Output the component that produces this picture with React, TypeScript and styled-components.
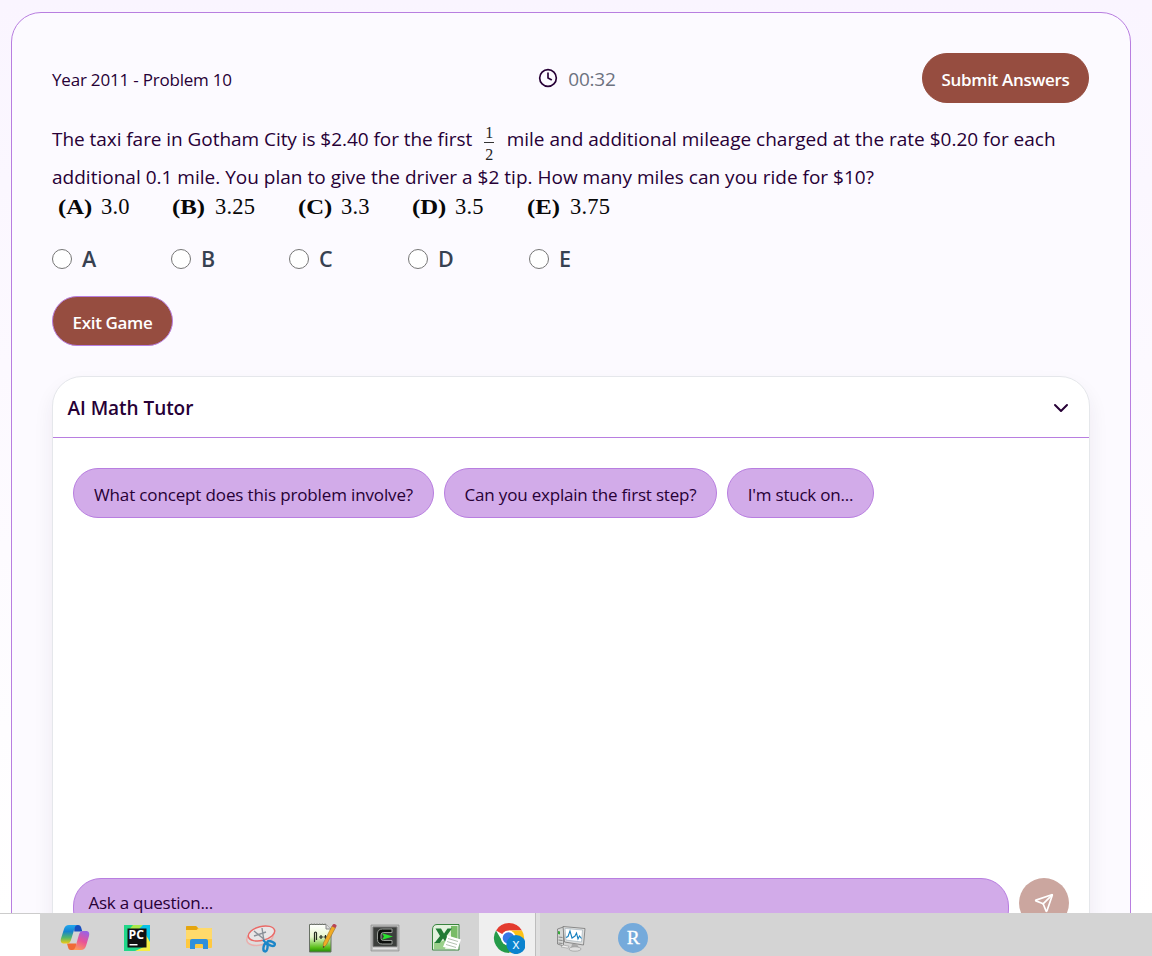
import React from "react";
import styled, { createGlobalStyle } from "styled-components";
import { ChevronDown, Clock, Send } from "lucide-react";

const ink = "#270036";
const violet = "#b87ee0";
const lilac = "#d2abe9";
const brick = "#964d40";

const Global = createGlobalStyle`
  * { box-sizing: border-box; }
  body { margin: 0; background: #fff; }
`;

const Screen = styled.div`
  width: 1152px;
  height: 956px;
  display: flex;
  flex-direction: column;
  overflow: hidden;
  font-family: "Open Sans", "Noto Sans", sans-serif;
  color: ${ink};
`;

const Page = styled.main`
  height: 913px;
  overflow: hidden;
  padding: 12px 21px 0 11px;
  background: linear-gradient(#faf5ff, #ffffff);
`;

const GameCard = styled.section`
  height: 1000px;
  border: 1px solid ${violet};
  border-radius: 30px;
  padding: 40px;
  background: #fcfaff;
`;

const Header = styled.header`
  width: 1037px;
  height: 50px;
  display: flex;
  align-items: center;
  justify-content: space-between;
`;

const Text = styled.span<{ $size?: number; $track?: number; $weight?: number }>`
  font-size: ${(p) => p.$size ?? 17}px;
  letter-spacing: ${(p) => p.$track ?? 0}px;
  font-weight: ${(p) => p.$weight ?? 400};
  white-space: nowrap;
`;

const Title = styled(Text)`
  padding-top: 3px;
`;

const Timer = styled.div`
  display: flex;
  align-items: center;
  gap: 10px;
  color: ${ink};
  span { color: #6d7280; padding-top: 2px; }
`;

const Button = styled.button<{ $width: number; $outlined?: boolean }>`
  display: flex;
  align-items: center;
  justify-content: center;
  width: ${(p) => p.$width}px;
  height: 50px;
  padding: 3px 0 0;
  border: 1px solid ${(p) => (p.$outlined ? violet : brick)};
  border-radius: 25px;
  background: ${brick};
  color: #fff;
  font-family: inherit;
`;

const Question = styled.div`
  margin-top: 17px;
`;

const Line = styled.div`
  display: flex;
  height: 38px;
  line-height: 38px;
`;

const Fraction = styled.span`
  display: flex;
  flex-direction: column;
  width: 10px;
  margin: 3px 12.5px 0 12px;
  text-align: center;
  font: 16px/19px "Liberation Serif", serif;
  color: #222;
  span:first-child { height: 21px; border-bottom: 1px solid #333; }
  span:last-child { padding-top: 2px; }
`;

const MathRow = styled.div`
  display: grid;
  grid-template-columns: 114px 126px 114px 115px 100px;
  height: 24px;
  padding-left: 6px;
  font: 22.5px/22px "Liberation Serif", serif;
  color: #080808;
`;

const MathChoice = styled.div`
  display: flex;
  gap: 8px;
  white-space: nowrap;
  span { letter-spacing: 0.2px; }
`;

const MathLabel = styled.b`
  width: 35px;
  font-size: 21.5px;
  transform: scaleX(1.15);
  transform-origin: left;
`;

const Options = styled.div`
  display: grid;
  grid-template-columns: 119px 118px 119px 121px 60px;
  height: 24px;
  margin-top: 27px;
`;

const Option = styled.label`
  display: flex;
  align-items: center;
  gap: 10px;
  height: 24px;
  color: #374151;
  ${Text} { line-height: 24px; padding-bottom: 1px; }
`;

const Radio = styled.span`
  width: 20px;
  height: 20px;
  border: 1px solid #767676;
  border-radius: 50%;
  background: #fff;
`;

const ExitRow = styled.div`
  margin: 25px 0 30px;
`;

const Tutor = styled.section`
  height: 640px;
  border: 1px solid #e5e7eb;
  border-radius: 30px;
  background: #fff;
  box-shadow: 0 10px 20px rgba(40, 20, 60, 0.07);
`;

const TutorHeader = styled.div`
  height: 61px;
  display: flex;
  align-items: center;
  justify-content: space-between;
  padding: 1px 16px 0 14.5px;
  border-bottom: 1px solid ${violet};
`;

const Chat = styled.div`
  height: 440px;
  padding: 30px 20px;
  display: flex;
  align-items: flex-start;
  gap: 10px;
`;

const Chip = styled.button<{ $width: number }>`
  width: ${(p) => p.$width}px;
  height: 50px;
  padding: 3px 0 0;
  border: 1px solid ${violet};
  border-radius: 25px;
  background: ${lilac};
  color: ${ink};
  font-family: inherit;
`;

const AskRow = styled.div`
  display: flex;
  gap: 10px;
  padding: 0 20px;
`;

const AskField = styled.div`
  display: flex;
  align-items: flex-start;
  width: 936px;
  height: 60px;
  padding: 14px 14.5px;
  line-height: 20px;
  border: 1px solid ${violet};
  border-radius: 28px;
  background: ${lilac};
`;

const SendButton = styled.button`
  display: grid;
  place-items: center;
  width: 50px;
  height: 50px;
  padding: 0;
  border: 0;
  border-radius: 50%;
  background: #cba69f;
  color: #fff;
`;

const Taskbar = styled.footer`
  display: flex;
  height: 43px;
  background: #d4d4d4;
`;

const TaskbarEdge = styled.div`
  width: 40px;
  margin-right: 4px;
  border-top: 1px solid #ccc;
  background: #fff;
`;

const Task = styled.div<{ $active?: boolean }>`
  width: 62px;
  padding: 9px 0 0 15px;
  background: ${(p) =>
    p.$active
      ? "linear-gradient(90deg, #d4d4d4 1px, #efefef 1px, #efefef 57px, #bdbdbd 57px, #bdbdbd 58px, #dfdfdf 58px)"
      : "none"};
  svg { display: block; }
`;

const Icon = ({ children }: { children: React.ReactNode }) => (
  <svg width="32" height="32" viewBox="0 0 32 32">{children}</svg>
);

const Copilot = () => (
  <Icon>
    <defs>
      <linearGradient id="cpL" x1="0" y1="0" x2="0" y2="1">
        <stop offset="0" stopColor="#22a8ee" />
        <stop offset=".35" stopColor="#1683cf" />
        <stop offset=".68" stopColor="#53b66a" />
        <stop offset="1" stopColor="#f4cb12" />
      </linearGradient>
      <linearGradient id="cpR" x1=".7" y1="0" x2=".3" y2="1">
        <stop offset="0" stopColor="#9a62e4" />
        <stop offset=".5" stopColor="#e85398" />
        <stop offset="1" stopColor="#ff9a5a" />
      </linearGradient>
    </defs>
    <path d="M15 3h4c2 0 2.700 1 3.300 3l1 3.500h-8z" fill="#174fc0" />
    <path d="M17 28h-5c-2 0-2.500-1-3-3l-1-3.500h9z" fill="#f06a35" />
    <path d="M10 3h9c-1.800 0-2.800 1.200-3.400 3L12 18c-.8 2.500-2 3.600-4 3.600H5c-3 0-3.700-2.300-3-5L5 7c.9-2.800 2.300-4 5-4z" fill="url(#cpL)" />
    <path d="M22 28h-9c1.800 0 2.800-1.200 3.400-3L20 12.500C20.800 10 22 9 24 9h3c3 0 3.700 2.300 3 5l-3 10c-.9 2.800-2.300 4-5 4z" fill="url(#cpR)" />
  </Icon>
);

const PyCharm = () => (
  <Icon>
    <path d="M3 3h26v26H3z" fill="#21d789" />
    <path d="M18 3h11v18l-9-9z" fill="#08c2e6" />
    <path d="M12 3h10l-6 6h-9z" fill="#a9e84b" />
    <path d="M25 13l4 7v9H14l11-5z" fill="#f5ee45" />
    <path d="M6.500 6.500h19v19h-19z" fill="#111" />
    <path d="M8.500 22h8v1.500h-8z" fill="#fff" />
    <text x="7.600" y="16.500" fontFamily="Open Sans, sans-serif" fontWeight="700" fontSize="11.500" fill="#fff" textLength="15.500" lengthAdjust="spacingAndGlyphs">PC</text>
  </Icon>
);

const Folder = () => (
  <Icon>
    <path d="M3 5q0-1 1-1h9l2 2h13q1 0 1 1v18q0 1-1 1H3z" fill="#ffc93f" />
    <path d="M3 5q0-1 1-1h9l2 2-1.500 2H3z" fill="#e5a50f" />
    <path d="M14 8l2-2h12q1 0 1 1v10H3V8z" fill="#ffda6b" />
    <path d="M7 27v-8q0-2 2-2h14q2 0 2 2v8h-5v-4q0-1-1-1h-6q-1 0-1 1v4z" fill="#2f8fdd" />
  </Icon>
);

const Snip = () => (
  <Icon>
    <g fill="none">
      <ellipse cx="15" cy="15.500" rx="13.500" ry="7.500" transform="rotate(-14 15 15.500)" stroke="#eab0ae" strokeWidth="1.500" fill="#dedede" />
      <ellipse cx="16.500" cy="11.500" rx="13.500" ry="7" transform="rotate(-14 16.500 11.500)" stroke="#ea6966" strokeWidth="1.500" fill="#e8e6e7" />
      <path d="M9 14l12-4M17 6l2 13M9 9l11 9" stroke="#8b9199" strokeWidth="1.400" />
      <ellipse cx="20.500" cy="25.500" rx="2" ry="4" transform="rotate(10 20.500 25.500)" stroke="#1c86c8" strokeWidth="2.400" />
      <ellipse cx="26" cy="21.500" rx="4" ry="2" transform="rotate(20 26 21.500)" stroke="#1c86c8" strokeWidth="2.400" />
      <path d="M18 18l4 4" stroke="#1c86c8" strokeWidth="2" />
    </g>
  </Icon>
);

const NotepadPlus = () => (
  <Icon>
    <defs>
      <linearGradient id="npp" x1="0" y1="0" x2="0" y2="1">
        <stop offset="0" stopColor="#fff" />
        <stop offset=".45" stopColor="#e8f7ce" />
        <stop offset=".85" stopColor="#55bd14" />
        <stop offset="1" stopColor="#238908" />
      </linearGradient>
    </defs>
    <path d="M2.500 2.500H19l5 5v22.500H2.500z" fill="url(#npp)" stroke="#687064" />
    <path d="M4 2.200h15" stroke="#888" strokeWidth="1.300" strokeDasharray="1.200 1.500" />
    <path d="M19 2.500v4.500h5" fill="#ddd" stroke="#888" />
    <path d="M7.500 20v-9q0-1 1-1t1 1v7M12 15h4M14 13v4M16.500 15h4M18.500 13v4" fill="none" stroke="#252b20" strokeWidth="1.200" />
    <path d="M25 4l3.500 1.700-9 17-3.400 3.300.3-5z" fill="#f0ab25" stroke="#8b6426" strokeWidth=".5" />
    <path d="M25.800 2.500q.6-1 1.800-.4l1.400.7q1 .6.500 1.500l-1 1.700-3.700-1.700z" fill="#b84556" />
    <path d="M16.200 24l-.2 2 1.600-1.200z" fill="#333" />
  </Icon>
);

const TerminalC = () => (
  <Icon>
    <path d="M2 3h28v26H2z" fill="#bfc0bf" stroke="#8d8d8d" strokeWidth=".7" />
    <path d="M4 5h24v19.500H4z" fill="#3c3f3c" stroke="#777" />
    <path d="M23 7h-9.500Q8.500 7 8.500 12v5.500q0 4.500 5 4.500H23v-3.500h-8.500q-2.500 0-2.500-2v-3.500q0-2.500 2.500-2.500H23z" fill="#0c0f0c" stroke="#a6aaa5" strokeWidth=".9" />
    <path d="M13 11.300l11 3.200-11 3.200 2-3.200z" fill="#29e22e" />
    <path d="M4 26.500h24" stroke="#e4e4e4" strokeWidth="1.500" />
  </Icon>
);

const Excel = () => (
  <Icon>
    <path d="M6 2.500h22V28H1.500V8q0-5.500 4.500-5.500z" fill="#e3f2de" stroke="#39843e" />
    <path d="M20 4h6.500v13H20z" fill="#78bc67" />
    <path d="M3 20q8 1 14-4l-3 11H3z" fill="#9ad08a" />
    <path d="M4.500 6.500h5.500l3 5 3.500-5H21l-5.500 7.500L21 21h-5.700L12 16.500 8.800 21H3.500L9 14z" fill="#217b35" />
    <path d="M16.500 13.500L30 17.500l-3.500 10L12 25z" fill="#fff" />
    <path d="M17 16.500l10 3M16 19.500l10 3M15 22.500l10 3" stroke="#a9bba7" strokeWidth=".9" />
  </Icon>
);

const Chrome = () => (
  <Icon>
    <circle cx="16" cy="16" r="15" fill="#fff" />
    <path d="M16 16L3 8.500A15 15 0 0 1 29 8.500H16z" fill="#e33b2e" />
    <path d="M29 8.500A15 15 0 0 1 16 31l6.500-11.300L16 8.500z" fill="#fbc116" />
    <path d="M3 8.500A15 15 0 0 0 16 31l6.500-11.200L9.500 19.500z" fill="#259b49" />
    <circle cx="15.500" cy="16" r="7.500" fill="#fff" />
    <circle cx="15.500" cy="16" r="5.800" fill="#3978e6" />
    <circle cx="23" cy="22.500" r="9.600" fill="#0b83ce" />
    <text x="23" y="27" textAnchor="middle" fontFamily="Open Sans, sans-serif" fontSize="14" fill="#e4f5ff">x</text>
  </Icon>
);

const Monitor = () => (
  <Icon>
    <path d="M2.500 7l6-2v19l-6-2z" fill="#d5d6d5" stroke="#777" strokeWidth=".8" />
    <path d="M3 9l2 .5v3l-2-.5z" fill="#35a739" />
    <path d="M3.500 15l4 .5M3.500 18l4 .5M3.500 21l4 .500" stroke="#888" />
    <path d="M8 4.500L30 6.500 28.500 23 9.500 20z" fill="#dcdddd" stroke="#808080" strokeWidth=".9" />
    <path d="M10 6.500l17.500 1.500-1 12-15.500-2z" fill="#fff" stroke="#9baab4" strokeWidth=".6" />
    <path d="M11 15.500l2-1 2-5.500 2 7 3-2 1.500-3 1.500 6 1.500-3 2 2.500" fill="none" stroke="#167fbf" strokeWidth="1.100" />
    <path d="M17 22h5l2 4h-8z" fill="#aaa" />
    <ellipse cx="20" cy="27" rx="6" ry="2.200" fill="#e0e0e0" stroke="#999" strokeWidth=".7" />
    <path d="M8 23l6 1.200-1 2-7-1.200z" fill="#eee" stroke="#999" strokeWidth=".6" />
  </Icon>
);

const RStudio = () => (
  <Icon>
    <circle cx="16" cy="16" r="15" fill="#75aadb" />
    <text x="16.200" y="21.500" textAnchor="middle" fontFamily="Liberation Serif, serif" fontSize="19.500" fill="#fff" stroke="#fff" strokeWidth=".3">R</text>
  </Icon>
);

const mathChoices = [
  ["(A)", "3.0"],
  ["(B)", "3.25"],
  ["(C)", "3.3"],
  ["(D)", "3.5"],
  ["(E)", "3.75"],
];

export default function App() {
  return (
    <Screen>
      <Global />
      <Page>
        <GameCard>
          <Header>
            <Title $track={-0.2}>Year 2011 - Problem 10</Title>
            <Timer>
              <Clock size={20} strokeWidth={2} />
              <Text $size={19} $track={-0.2}>00:32</Text>
            </Timer>
            <Button $width={167}>
              <Text $weight={600} $track={-0.32}>Submit Answers</Text>
            </Button>
          </Header>
          <Question>
            <Line>
              <Text $size={19} $track={-0.05}>The taxi fare in Gotham City is $2.40 for the first</Text>
              <Fraction><span>1</span><span>2</span></Fraction>
              <Text $size={19}>mile and additional mileage charged at the rate $0.20 for each</Text>
            </Line>
            <Line>
              <Text $size={19} $track={0.01}>additional 0.1 mile. You plan to give the driver a $2 tip. How many miles can you ride for $10?</Text>
            </Line>
          </Question>
          <MathRow>
            {mathChoices.map(([label, value]) => (
              <MathChoice key={label}>
                <MathLabel>{label}</MathLabel>
                <span>{value}</span>
              </MathChoice>
            ))}
          </MathRow>
          <Options>
            {["A", "B", "C", "D", "E"].map((letter) => (
              <Option key={letter}>
                <Radio />
                <Text $size={21.5} $weight={600}>{letter}</Text>
              </Option>
            ))}
          </Options>
          <ExitRow>
            <Button $width={121} $outlined>
              <Text $weight={600} $track={-0.35}>Exit Game</Text>
            </Button>
          </ExitRow>
          <Tutor>
            <TutorHeader>
              <Text $size={19} $weight={600} $track={-0.05}>AI Math Tutor</Text>
              <ChevronDown size={24} />
            </TutorHeader>
            <Chat>
              <Chip $width={361}><Text $track={-0.14}>What concept does this problem involve?</Text></Chip>
              <Chip $width={273}><Text $track={-0.19}>Can you explain the first step?</Text></Chip>
              <Chip $width={147}><Text $track={-0.23}>I'm stuck on...</Text></Chip>
            </Chat>
            <AskRow>
              <AskField><Text $track={-0.26}>Ask a question...</Text></AskField>
              <SendButton><Send size={20} /></SendButton>
            </AskRow>
          </Tutor>
        </GameCard>
      </Page>
      <Taskbar>
        <TaskbarEdge />
        <Task><Copilot /></Task>
        <Task><PyCharm /></Task>
        <Task><Folder /></Task>
        <Task><Snip /></Task>
        <Task><NotepadPlus /></Task>
        <Task><TerminalC /></Task>
        <Task><Excel /></Task>
        <Task $active><Chrome /></Task>
        <Task><Monitor /></Task>
        <Task><RStudio /></Task>
      </Taskbar>
    </Screen>
  );
}
